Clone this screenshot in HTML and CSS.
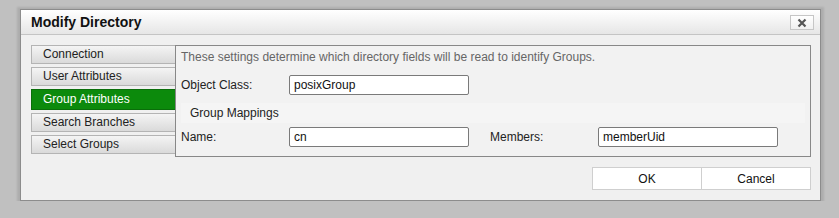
FILE: index.html
```html
<!DOCTYPE html>
<html lang="en">
<head>
  <meta charset="UTF-8">
  <title>Modify Directory</title>
  <link rel="stylesheet" href="styles.css">
</head>
<body>
  <div class="dialog">
    <div class="dialog-header">
      <span class="dialog-title">Modify Directory</span>
      <button class="close-button" title="Close">
        <svg width="10" height="10" viewBox="0 0 10 10"><path d="M1.5 1.5 L8.5 8.5 M8.5 1.5 L1.5 8.5" stroke="#555" stroke-width="2.2" fill="none"/></svg>
      </button>
    </div>
    <div class="dialog-body">
      <div class="main-area">
        <ul class="tab-list">
          <li class="tab">Connection</li>
          <li class="tab">User Attributes</li>
          <li class="tab active">Group Attributes</li>
          <li class="tab">Search Branches</li>
          <li class="tab">Select Groups</li>
        </ul>
        <div class="tab-panel">
          <div class="description">These settings determine which directory fields will be read to identify Groups.</div>
          <div class="field-row">
            <label class="field-label">Object Class:</label>
            <input class="field-input" type="text" value="posixGroup">
          </div>
          <div class="group-title">Group Mappings</div>
          <div class="field-row">
            <label class="field-label">Name:</label>
            <input class="field-input" type="text" value="cn">
            <label class="field-label second">Members:</label>
            <input class="field-input" type="text" value="memberUid">
          </div>
        </div>
      </div>
      <div class="button-row">
        <button class="dialog-button">OK</button>
        <button class="dialog-button">Cancel</button>
      </div>
    </div>
  </div>
</body>
</html>
```

FILE: styles.css
```css
body {
  margin: 0;
  background: #c0c0c0;
  font-family: "Liberation Sans", Arial, sans-serif;
  font-size: 12px;
  color: #222;
  padding: 9px 0 0 20px;
}
.dialog {
  width: 799px;
  height: 190px;
  background: #f0f0f0;
  border: 1px solid #8c8c8c;
  box-shadow: 0 1px 2px 3px rgba(0,0,0,0.1);
  display: flex;
  flex-direction: column;
}
.dialog-header {
  height: 24px;
  background: linear-gradient(to bottom, #ffffff, #e6e6e6);
  border-bottom: 1px solid #c4c4c4;
  display: flex;
  align-items: center;
  justify-content: space-between;
  padding: 0 6px 0 10px;
}
.dialog-title {
  font-weight: bold;
  font-size: 14px;
  color: #111;
}
.close-button {
  width: 24px;
  height: 15px;
  padding: 0;
  margin-top: 1px;
  border: 1px solid #c6c6c6;
  background: linear-gradient(to bottom, #ffffff, #f0f0f0);
  display: flex;
  align-items: center;
  justify-content: center;
}
.dialog-body {
  padding: 10px 9px 0 10px;
}
.main-area {
  display: flex;
}
.tab-list {
  list-style: none;
  margin: 0;
  padding: 0;
  width: 144px;
  display: flex;
  flex-direction: column;
  gap: 3px;
}
.tab {
  height: 17px;
  line-height: 17px;
  padding-left: 11px;
  border: 1px solid #b4b4b4;
  border-right: none;
  background: linear-gradient(to bottom, #f4f4f4, #dadada);
  color: #222;
}
.tab.active {
  height: 19px;
  line-height: 19px;
  background: #0c8a0c;
  border-color: #0a6e0a;
  color: #fff;
}
.tab-panel {
  flex: 1;
  height: 102px;
  border: 1px solid #888;
  background: #f2f2f2;
  padding: 3px 5px 5px 5px;
}
.description {
  line-height: 16px;
  color: #666;
}
.field-row {
  display: flex;
  align-items: center;
  margin-top: 10px;
}
.field-label {
  width: 108px;
}
.field-label.second {
  margin-left: 21px;
}
.field-input {
  width: 180px;
  height: 20px;
  box-sizing: border-box;
  border: 1px solid #7a7a7a;
  border-radius: 2px;
  padding: 0 4px;
  font-family: inherit;
  font-size: 12px;
  color: #111;
  background: #fff;
}
.group-title {
  margin-top: 8px;
  height: 20px;
  line-height: 20px;
  padding-left: 9px;
  background: #f5f5f5;
}
.group-title + .field-row {
  margin-top: 4px;
}
.button-row {
  display: flex;
  justify-content: flex-end;
  margin-top: 10px;
}
.dialog-button {
  width: 110px;
  height: 23px;
  border: 1px solid #cfcfcf;
  background: #fff;
  font-family: inherit;
  font-size: 12px;
  color: #111;
  margin-left: -1px;
}
```
